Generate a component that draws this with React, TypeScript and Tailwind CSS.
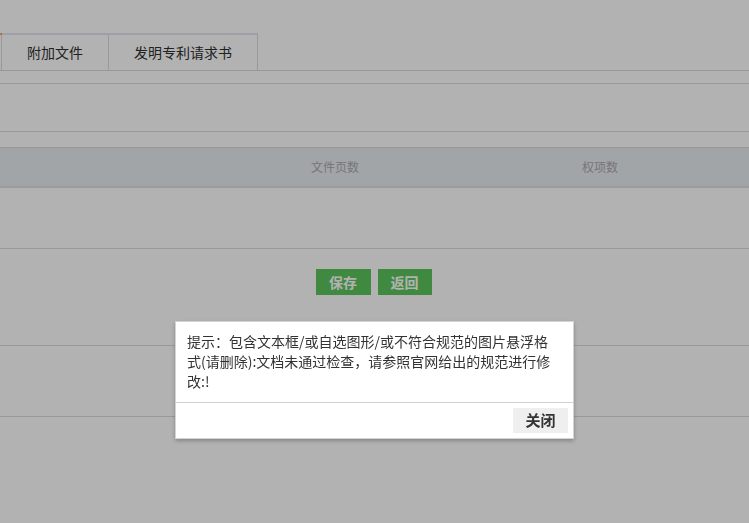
const font = { fontFamily: '"Noto Sans CJK SC", "Liberation Sans", sans-serif' };

function Tabs() {
  return (
    <div className="h-[38px] border-b border-[#dbdbdb] flex items-end">
      <div className="relative ml-px flex h-[37px]">
        <span className="absolute -left-px top-0 w-[2px] h-[2px] bg-[#f0b050]" />
        <div className="w-[108px] h-full border-t-2 border-x border-t-[#e4e4ee] border-x-[#dbdbdb] flex items-center justify-center text-[14px] text-[#303030]">
          附加文件
        </div>
        <div className="w-[149px] h-full border-t-2 border-r border-t-[#e4e4ee] border-r-[#dbdbdb] flex items-center justify-center text-[14px] text-[#303030]">
          发明专利请求书
        </div>
      </div>
    </div>
  );
}

function TableHead() {
  return (
    <div className="grid grid-cols-[200px_270px_260px_1fr] h-[41px] border-t border-b-2 border-t-[#dbdbdb] border-b-[#dcdee2] bg-[#e8ecf0] text-[12px] text-[#aaaaaa]">
      <div />
      <div className="flex items-center justify-center">文件页数</div>
      <div className="flex items-center justify-center">权项数</div>
      <div />
    </div>
  );
}

function Dialog() {
  return (
    <div className="fixed left-[175px] top-[321px] z-20 w-[399px] bg-white border border-[#d4d4d4] shadow-[0_2px_4px_rgba(0,0,0,0.25)]">
      <p className="pt-[9px] pb-[11px] pl-[11px] pr-[15px] text-[14px] leading-[20px] text-[#333]">
        提示：包含文本框/或自选图形/或不符合规范的图片悬浮格式(请删除):文档未通过检查，请参照官网给出的规范进行修改:!
      </p>
      <div className="border-t border-[#d0d0d0] h-[36px] flex justify-end pt-[5px] pr-[5px]">
        <button className="w-[55px] h-[25px] bg-[#efefef] text-[15px] font-semibold text-[#333] flex items-center justify-center">
          关闭
        </button>
      </div>
    </div>
  );
}

export default function App() {
  return (
    <div className="relative min-h-[523px] bg-white pt-[33px]" style={font}>
      <Tabs />
      <div className="h-[13px] border-b border-[#dbdbdb]" />
      <div className="h-[48px] border-b border-[#dbdbdb]" />
      <div className="h-[15px]" />
      <TableHead />
      <div className="h-[61px] border-b border-[#dbdbdb]" />
      <div className="h-[97px] border-b border-[#dbdbdb] pt-[20px] pr-[2px] flex justify-center gap-[7px]">
        <button className="w-[55px] h-[26px] bg-[#5cc45c] text-white text-[14px] font-bold">保存</button>
        <button className="w-[54px] h-[26px] bg-[#5cc45c] text-white text-[14px] font-bold">返回</button>
      </div>
      <div className="h-[71px] border-b border-[#dbdbdb]" />
      <div className="fixed inset-0 z-10 bg-black/30" />
      <Dialog />
    </div>
  );
}
